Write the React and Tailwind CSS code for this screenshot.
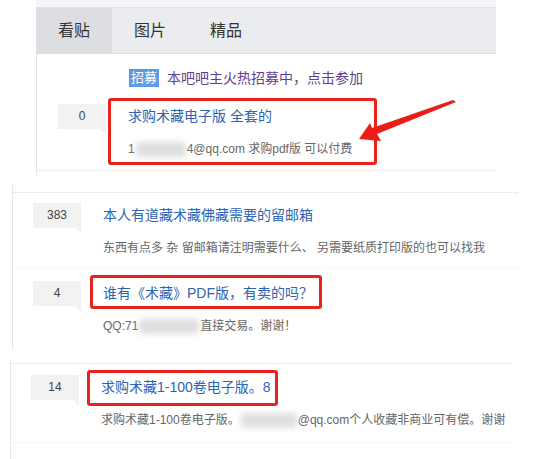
import React from 'react';

const FONT = "font-['Liberation_Sans','Noto_Sans_CJK_SC',sans-serif]";

const Blur = ({ w }) => (
  <span
    className="inline-block h-[15px] align-middle bg-[#dedede] blur-[3px] rounded-sm mx-[1px]"
    style={{ width: w }}
  />
);

const CountBox = ({ n }) => (
  <div className="relative w-[48px] h-[25px] shrink-0 bg-[#f2f2f2] text-[12px] leading-[25px] text-center text-[#444]">
    {n}
    <span className="absolute right-0 top-full w-0 h-0 border-t-[6px] border-t-[#f2f2f2] border-l-[6px] border-l-transparent" />
  </div>
);

const ThreadRow = ({ count, title, children, className = '' }) => (
  <div className={`flex gap-[22px] ${className}`}>
    <CountBox n={count} />
    <div className="min-w-0">
      <div className="h-[25px] text-[14px] leading-[25px] text-[#2d64b3] whitespace-nowrap">{title}</div>
      <div className="mt-[10px] h-[20px] text-[12px] leading-[20px] text-[#666] whitespace-nowrap">{children}</div>
    </div>
  </div>
);

const tabs = ['看贴', '图片', '精品'];

export default function App() {
  return (
    <div className={`relative w-[546px] h-[459px] overflow-hidden bg-white ${FONT}`}>
      {/* first capture: tabs + recruit + thread */}
      <div className="ml-[36px] w-[460px]">
        <div className="h-[8px] bg-[#f4f5f7] border-b border-[#e0e2e5]" />
        <div className="flex h-[46px] bg-[#eaecef] border-b border-[#dcdee2]">
          {tabs.map((t, i) => (
            <div
              key={t}
              className={`w-[76px] flex items-center justify-center text-[16px] text-[#333] ${i === 0 ? 'bg-[#dcdee1]' : ''}`}
            >
              {t}
            </div>
          ))}
        </div>
        <div className="border-l border-[#e4e4e4]">
          <div className="pt-[15px] pl-[92px] flex items-center gap-[8px]">
            <span className="h-[18px] px-[2px] bg-[#5d9be6] text-white text-[13px] leading-[18px]">招募</span>
            <span className="text-[14px] text-[#5f3f8f] leading-[18px]">本吧吧主火热招募中，点击参加</span>
          </div>
          <div className="pt-[17px] pl-[21px] pb-[11px] border-b border-dotted border-[#dcdcdc]">
            <ThreadRow count="0" title="求购术藏电子版 全套的">
              1<Blur w={50} />4@qq.com 求购pdf版 可以付费
            </ThreadRow>
          </div>
          <div className="h-[6px]" />
        </div>
      </div>

      {/* second capture */}
      <div className="mt-[8px] ml-[12px] w-[506px] border-l border-[#e6e6e6] pt-[7px]">
        <div className="border-t border-dotted border-[#dcdcdc] pt-[10px] pb-[10px] pl-[20px] border-b border-b-solid border-b-[#efefef]">
          <ThreadRow count="383" title="本人有道藏术藏佛藏需要的留邮箱">
            东西有点多 杂 留邮箱请注明需要什么、 另需要纸质打印版的也可以找我
          </ThreadRow>
        </div>
        <div className="pt-[12px] pb-[14px] pl-[20px]">
          <ThreadRow count="4" title="谁有《术藏》PDF版，有卖的吗？">
            QQ:71<Blur w={60} />直接交易。谢谢！
          </ThreadRow>
        </div>
      </div>

      {/* third capture */}
      <div className="mt-[10px] ml-[10px] w-[504px] border-l border-[#e6e6e6] pt-[3px] pb-[20px]">
        <div className="border-t border-dotted border-[#dcdcdc] pt-[11px] pb-[12px] pl-[20px] border-b border-b-solid border-b-[#efefef]">
          <ThreadRow count="14" title="求购术藏1-100卷电子版。8">
            求购术藏1-100卷电子版。<Blur w={56} />@qq.com个人收藏非商业可有偿。谢谢
          </ThreadRow>
        </div>
      </div>

      {/* red annotations */}
      <div className="absolute left-[108px] top-[98px] w-[269px] h-[67px] border-[3px] border-[#e8231d] rounded-[3px]" />
      <div className="absolute left-[90px] top-[275px] w-[232px] h-[34px] border-[3px] border-[#e8231d] rounded-[3px]" />
      <div className="absolute left-[87px] top-[370px] w-[191px] h-[36px] border-[3px] border-[#e8231d] rounded-[3px]" />
      <svg className="absolute left-0 top-0 pointer-events-none" width="546" height="459" viewBox="0 0 546 459">
        <polygon
          points="359,139 370,123 372,128 453,100 456,102 377,134 381,141"
          fill="#ec1c17"
        />
      </svg>
    </div>
  );
}
